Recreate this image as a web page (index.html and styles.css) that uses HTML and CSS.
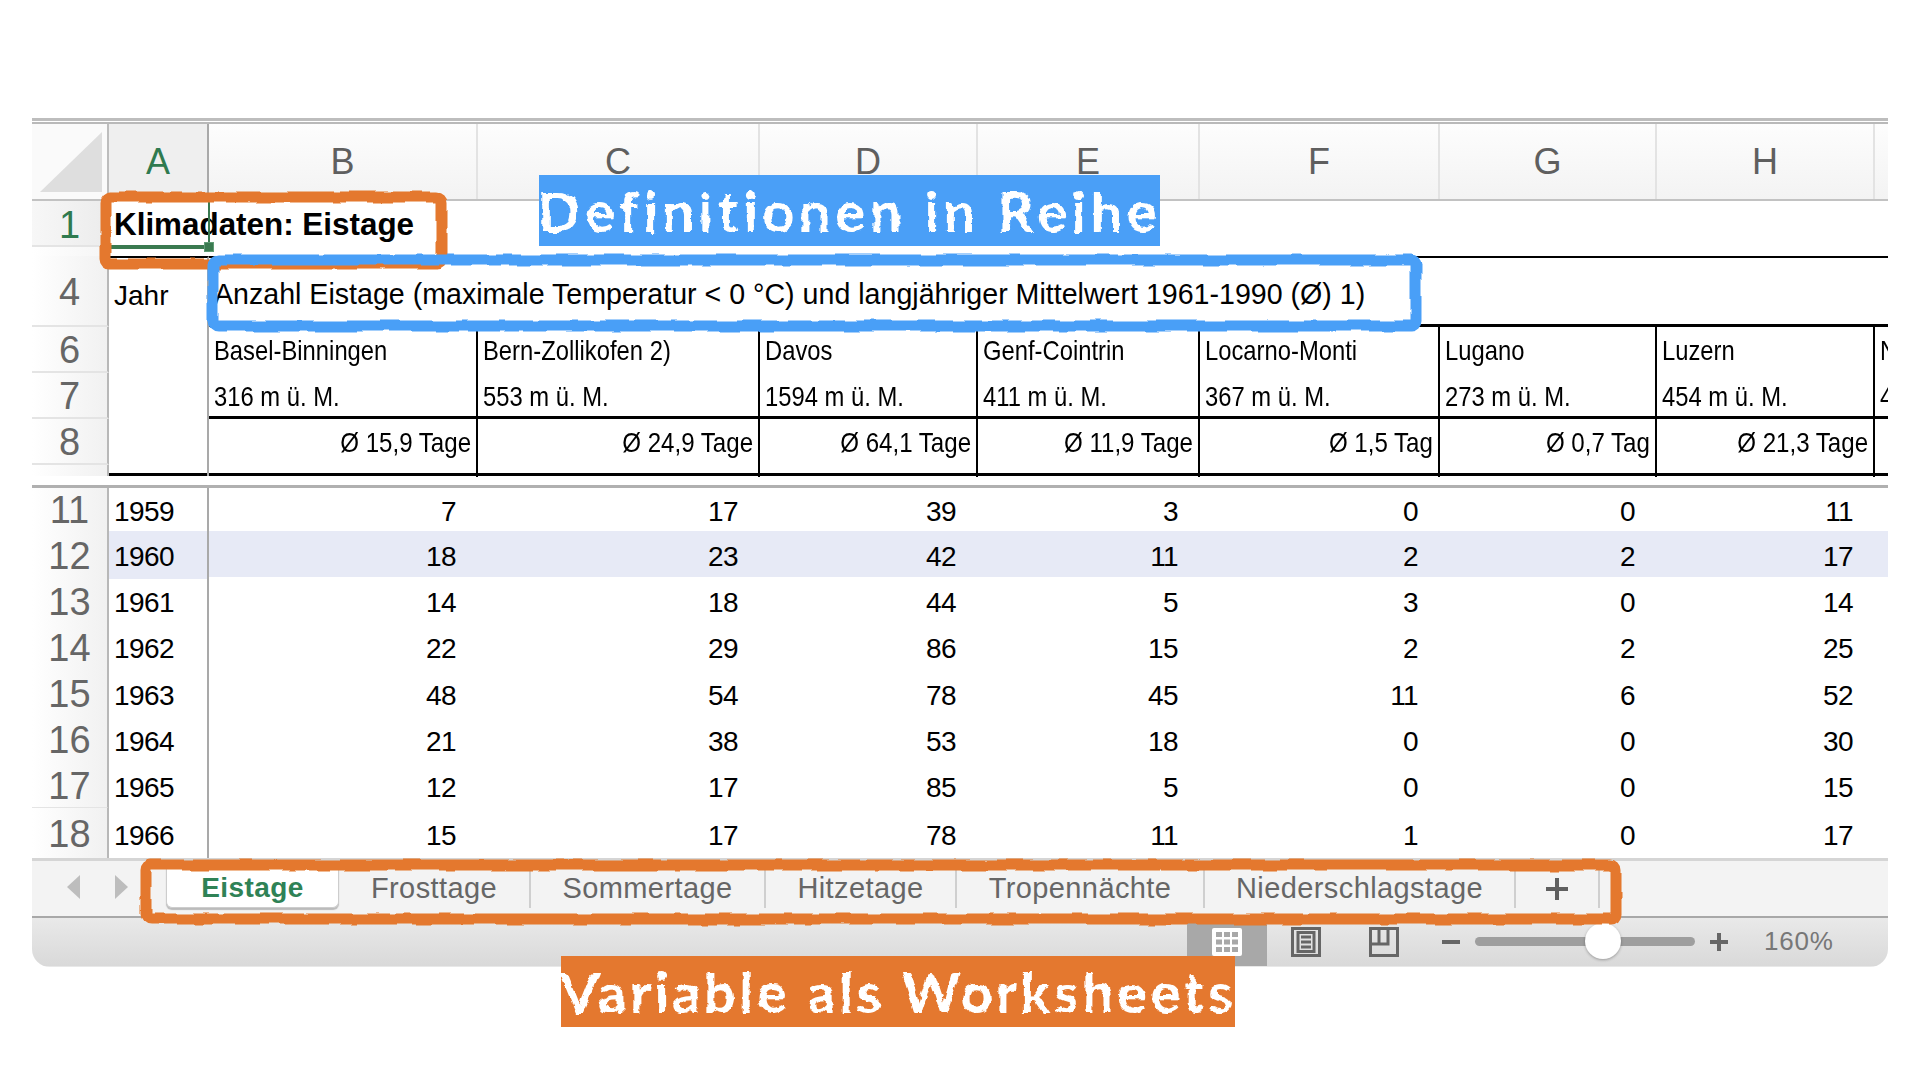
FILE: index.html
```html
<!DOCTYPE html>
<html lang="de">
<head>
<meta charset="utf-8">
<title>Klimadaten: Eistage</title>
<link rel="stylesheet" href="styles.css">
</head>
<body>
<svg class="defs" width="0" height="0" aria-hidden="true">
  <filter id="rough" x="-5%" y="-20%" width="110%" height="140%">
    <feTurbulence type="fractalNoise" baseFrequency="0.035" numOctaves="2" seed="4"/>
    <feDisplacementMap in="SourceGraphic" scale="5" xChannelSelector="R" yChannelSelector="G"/>
  </filter>
  <filter id="roughtext" x="-2%" y="-10%" width="104%" height="120%">
    <feTurbulence type="fractalNoise" baseFrequency="0.09" numOctaves="3" seed="9"/>
    <feDisplacementMap in="SourceGraphic" scale="6" xChannelSelector="R" yChannelSelector="G"/>
  </filter>
</svg>
<main class="sheet">
  <div class="topbar"></div>
  <div class="row colhead">
    <div class="corner"><svg class="corner-tri" width="76" height="74" viewBox="0 0 76 74"><path d="M8 68H70V8Z"/></svg></div>
    <div class="ch sel">A</div><div class="ch">B</div><div class="ch">C</div><div class="ch">D</div><div class="ch">E</div><div class="ch">F</div><div class="ch">G</div><div class="ch">H</div><div class="ch end"></div>
  </div>

  <div class="row r1">
    <div class="rh sel"><span>1</span></div>
    <div class="title">Klimadaten: Eistage</div>
    <div class="selfill"></div>
  </div>

  <div class="row r4">
    <div class="rh"><span>4</span></div>
    <div class="c a jahr">Jahr</div>
    <div class="c long">Anzahl Eistage (maximale Temperatur &lt; 0 °C) und langjähriger Mittelwert 1961-1990 (Ø) 1)</div>
  </div>

  <div class="row r6">
    <div class="rh"><span>6</span></div>
    <div class="c a"></div>
    <div class="c st"><span>Basel-Binningen</span></div><div class="c st"><span>Bern-Zollikofen 2)</span></div><div class="c st"><span>Davos</span></div><div class="c st"><span>Genf-Cointrin</span></div><div class="c st"><span>Locarno-Monti</span></div><div class="c st"><span>Lugano</span></div><div class="c st"><span>Luzern</span></div><div class="c st"><span>N</span></div>
  </div>
  <div class="row r7">
    <div class="rh"><span>7</span></div>
    <div class="c a"></div>
    <div class="c st"><span>316 m ü. M.</span></div><div class="c st"><span>553 m ü. M.</span></div><div class="c st"><span>1594 m ü. M.</span></div><div class="c st"><span>411 m ü. M.</span></div><div class="c st"><span>367 m ü. M.</span></div><div class="c st"><span>273 m ü. M.</span></div><div class="c st"><span>454 m ü. M.</span></div><div class="c st"><span>4</span></div>
  </div>
  <div class="row r8">
    <div class="rh"><span>8</span></div>
    <div class="c a"></div>
    <div class="c av"><span>Ø 15,9 Tage</span></div><div class="c av"><span>Ø 24,9 Tage</span></div><div class="c av"><span>Ø 64,1 Tage</span></div><div class="c av"><span>Ø 11,9 Tage</span></div><div class="c av"><span>Ø 1,5 Tag</span></div><div class="c av"><span>Ø 0,7 Tag</span></div><div class="c av"><span>Ø 21,3 Tage</span></div><div class="c av"></div>
  </div>
  <div class="row gap">
    <div class="rh"></div><div class="c a"></div>
  </div>

  <div class="row data first"><div class="rh"><span>11</span></div><div class="c a y">1959</div><div class="c n">7</div><div class="c n">17</div><div class="c n">39</div><div class="c n">3</div><div class="c n">0</div><div class="c n">0</div><div class="c n">11</div></div>
  <div class="row data hl"><div class="rh"><span>12</span></div><div class="c a y">1960</div><div class="c n">18</div><div class="c n">23</div><div class="c n">42</div><div class="c n">11</div><div class="c n">2</div><div class="c n">2</div><div class="c n">17</div></div>
  <div class="row data"><div class="rh"><span>13</span></div><div class="c a y">1961</div><div class="c n">14</div><div class="c n">18</div><div class="c n">44</div><div class="c n">5</div><div class="c n">3</div><div class="c n">0</div><div class="c n">14</div></div>
  <div class="row data"><div class="rh"><span>14</span></div><div class="c a y">1962</div><div class="c n">22</div><div class="c n">29</div><div class="c n">86</div><div class="c n">15</div><div class="c n">2</div><div class="c n">2</div><div class="c n">25</div></div>
  <div class="row data"><div class="rh"><span>15</span></div><div class="c a y">1963</div><div class="c n">48</div><div class="c n">54</div><div class="c n">78</div><div class="c n">45</div><div class="c n">11</div><div class="c n">6</div><div class="c n">52</div></div>
  <div class="row data"><div class="rh"><span>16</span></div><div class="c a y">1964</div><div class="c n">21</div><div class="c n">38</div><div class="c n">53</div><div class="c n">18</div><div class="c n">0</div><div class="c n">0</div><div class="c n">30</div></div>
  <div class="row data"><div class="rh"><span>17</span></div><div class="c a y">1965</div><div class="c n">12</div><div class="c n">17</div><div class="c n">85</div><div class="c n">5</div><div class="c n">0</div><div class="c n">0</div><div class="c n">15</div></div>
  <div class="row data last"><div class="rh"><span>18</span></div><div class="c a y">1966</div><div class="c n">15</div><div class="c n">17</div><div class="c n">78</div><div class="c n">11</div><div class="c n">1</div><div class="c n">0</div><div class="c n">17</div></div>

  <div class="tabbar">
    <div class="nav">
      <svg width="14" height="26" viewBox="0 0 14 26"><path d="M14 1V25L1 13Z"/></svg>
      <svg width="14" height="26" viewBox="0 0 14 26"><path d="M0 1V25L13 13Z"/></svg>
    </div>
    <div class="tabs">
      <div class="tab active">Eistage</div>
      <div class="tab">Frosttage</div>
      <div class="tab">Sommertage</div>
      <div class="tab">Hitzetage</div>
      <div class="tab">Tropennächte</div>
      <div class="tab">Niederschlagstage</div>
      <div class="tab add"><svg width="22" height="22" viewBox="0 0 22 22"><path d="M11 0V22M0 11H22"/></svg></div>
    </div>
  </div>

  <div class="status">
    <div class="view on">
      <svg width="30" height="28" viewBox="0 0 30 28"><rect class="gridbg" x="1" y="1" width="28" height="26" rx="1"/><path class="gridcells" d="M4 4H10V9H4ZM12 4H18V9H12ZM20 4H26V9H20ZM4 11.5H10V16.5H4ZM12 11.5H18V16.5H12ZM20 11.5H26V16.5H20ZM4 19H10V24H4ZM12 19H18V24H12ZM20 19H26V24H20Z"/></svg>
    </div>
    <div class="view">
      <svg width="30" height="30" viewBox="0 0 30 30"><rect x="1.5" y="1.5" width="27" height="27"/><rect x="7" y="5.5" width="16" height="19"/><path d="M10 10H20M10 15H20M10 20H20"/></svg>
    </div>
    <div class="view">
      <svg width="30" height="30" viewBox="0 0 30 30"><path d="M1.5 1.5H28.5V28.5H1.5ZM1.5 17H19V1.5M10 1.5V17"/></svg>
    </div>
    <div class="zoomctl">
      <span class="zbtn minus"></span>
      <div class="track"><span class="knob"></span></div>
      <span class="zbtn plus"></span>
      <span class="pct">160%</span>
    </div>
  </div>
</main>

<div class="sel-bottom"></div>
<div class="sel-side"></div>
<div class="sel-handle"></div>

<svg class="marks" width="1920" height="1080" viewBox="0 0 1920 1080" aria-hidden="true">
  <rect class="mk orange" x="105" y="197" width="337" height="67" rx="5"/>
  <rect class="mk blue" x="213" y="260" width="1203" height="66" rx="5"/>
  <rect class="mk orange" x="146" y="865" width="1470" height="54" rx="5"/>
</svg>
<div class="label lblue"><span>Definitionen in Reihe</span></div>
<div class="label lorange"><span>Variable als Worksheets</span></div>
</body>
</html>
```

FILE: styles.css
```css
html, body { margin: 0; padding: 0; background: #fff; }
body { width: 1920px; height: 1080px; overflow: hidden; position: relative; font-family: "Liberation Sans", Arial, sans-serif; color: #000; }
.defs { position: absolute; }

.sheet { margin: 118px 0 0 32px; width: 1856px; overflow: hidden; border-radius: 0 0 18px 18px; }
.topbar { height: 6px; box-sizing: border-box; border-top: 3px solid #bdbdbd; border-bottom: 2px solid #b9b9b9; }

.row { display: grid; grid-template-columns: 77px 100px 269px 282px 218px 222px 240px 217px 218px 13px; align-items: stretch; }

/* column headings */
.colhead { height: 77px; border-bottom: 2px solid #c2c2c2; background: linear-gradient(#fdfdfd, #f3f3f3); box-sizing: border-box; }
.corner { background: #fafafa; border-right: 2px solid #bdbdbd; box-sizing: border-box; }
.corner-tri { display: block; }
.corner-tri path { fill: #dedede; }
.ch { display: flex; justify-content: center; align-items: center; font-size: 36px; color: #5f5f5f; border-right: 2px solid #e3e3e3; box-sizing: border-box; }
.ch.sel { color: #2f7a4f; background: #efefef; border-right: 2px solid #a9a9a9; }
.ch.end { border-right: 0; }

/* row headings */
.rh { display: flex; justify-content: center; align-items: center; font-size: 38px; color: #666; background: linear-gradient(90deg, #fff, #f1f1f1); border-right: 2px solid #b8b8b8; border-bottom: 2px solid #e4e4e4; box-sizing: border-box; }
.rh span { position: relative; top: 1px; }
.rh.sel { color: #2f7a4f; background: linear-gradient(90deg, #f7f7f7, #ececec); padding-top: 3px; }

/* cells */
.c { box-sizing: border-box; font-size: 28px; white-space: nowrap; overflow: hidden; display: flex; align-items: center; padding: 5px 6px 0 5px; }
.a { border-right: 2px solid #a9a9a9; }

.r1 { height: 55px; position: relative; grid-template-rows: 46px 9px; }
.r1 .rh { grid-row: 1; }
.title { grid-column: 2 / 6; grid-row: 1; font-size: 31.4px; font-weight: 700; padding: 2px 0 0 5px; display: flex; align-items: center; }
.selfill { grid-column: 1; grid-row: 2; background: linear-gradient(90deg, #fff, #f5f5f5); border-right: 2px solid #b8b8b8; }

.r4 { height: 71px; box-sizing: border-box; }
.r4 .rh { padding-top: 2px; }
.r4 .a { border-top: 2px solid #000; padding-top: 6px; }
.r4 .long { grid-column: 3 / 11; font-size: 28.6px; padding: 6px 0 0 5px; overflow: visible; border-top: 2px solid #000; border-bottom: 3px solid #000; }
.jahr { letter-spacing: 0; }

.r6, .r7 { height: 46px; }
.st { border-right: 2px solid #000; padding: 2px 0 0 5px; }
.r7 .st { padding-top: 5px; }
.st span { display: inline-block; transform: scaleX(.85); transform-origin: 0 50%; }
.r7 .st { border-bottom: 3px solid #000; }
.r8 { height: 46px; }
.av { border-right: 2px solid #000; justify-content: flex-end; padding: 0 5px 0 0; height: 58px; margin-bottom: -12px; padding-bottom: 10px; position: relative; z-index: 1; }
.av span { display: inline-block; transform: scaleX(.86); transform-origin: 100% 50%; }
.st:last-child, .av:last-child { border-right: 0; }
.gap { height: 11px; grid-template-columns: 77px 100px 1fr; border-bottom: 3px solid #000; box-sizing: border-box; position: relative; }
.gap .c { padding: 0; margin-bottom: -3px; }
.gap .rh { border-bottom: 0; margin-bottom: -3px; }

/* frozen panes divider */
.data { height: 46.2px; }
.data.first { height: 45.5px; margin-top: 9px; border-top: 3px solid #b0b0b0; box-sizing: border-box; }
.data .c { align-items: flex-end; padding-bottom: 5.5px; letter-spacing: -0.6px; }
.data.first .c { padding-bottom: 5px; }
.data .rh { padding-top: 3px; }
.data.first .rh { padding-top: 0; }
.data.last { height: 50px; }
.data.last .rh { padding-bottom: 0; padding-top: 2px; border-bottom: 0; }
.data.last .c { padding-bottom: 6px; }
.n { justify-content: flex-end; padding-right: 22px; }
.hl { background: #e7eaf6; }
.hl .a { background: #e7eaf6; }

/* sheet tabs */
.tabbar { height: 60px; box-sizing: border-box; background: #f3f3f3; border-top: 3px solid #d5d5d5; border-bottom: 2px solid #a8a8a8; display: flex; }
.nav { width: 134px; display: flex; gap: 35px; padding: 13px 0 0 34px; box-sizing: border-box; }
.nav path { fill: #bdbdbd; }
.tabs { display: grid; grid-template-columns: 173px 192px 235px 191px 248px 311px 84px; align-items: start; }
.tab { height: 41px; box-sizing: border-box; margin-top: 6px; padding-top: 3px; border-right: 2px solid #cfcfcf; display: flex; align-items: center; justify-content: center; font-size: 29px; letter-spacing: 0.4px; color: #666; }
.tab.active { background: #fff; color: #2f8256; font-weight: 700; border: 1px solid #cdcdcd; border-top: 0; border-radius: 0 0 6px 6px; box-shadow: 0 2px 1px #bbb; font-size: 28px; }
.tab.add svg { fill: none; stroke: #5f5f5f; stroke-width: 4; }

/* status bar */
.status { height: 49px; background: linear-gradient(#e9e9e9, #d9d9d9); display: flex; padding-left: 1155px; box-sizing: border-box; border-bottom: 1px solid #e8e8e8; }
.view { width: 80px; display: flex; align-items: center; justify-content: center; }
.view.on { background: #a8a8a8; width: 80px; }
.view svg { fill: none; stroke: #666; stroke-width: 3; }
.view.on .gridbg { fill: #fff; stroke: #fff; stroke-width: 2; }
.view.on .gridcells { fill: #a8a8a8; stroke: none; }
.view.on + .view { width: 78px; }
.view + .view + .view { width: 77px; }
.zoomctl { display: flex; align-items: center; padding-left: 20px; }
.zbtn { width: 18px; height: 18px; position: relative; display: block; }
.zbtn::before { content: ""; position: absolute; left: 0; right: 0; top: 7px; height: 4px; background: #666; }
.plus::after { content: ""; position: absolute; top: 0; bottom: 0; left: 7px; width: 4px; background: #666; }
.track { width: 220px; height: 9px; border-radius: 5px; background: #9e9e9e; margin: 0 15px 0 15px; position: relative; }
.knob { position: absolute; left: 110px; top: -14px; width: 36px; height: 36px; border-radius: 50%; background: #fff; box-shadow: 0 1px 3px rgba(0,0,0,.3); }
.pct { font-size: 26px; letter-spacing: 0.8px; color: #777; margin-left: 36px; }

/* overlays */
.sel-bottom { position: absolute; left: 109px; top: 245px; width: 95px; height: 4px; background: #3a7a50; }
.sel-side { position: absolute; left: 208px; top: 200px; width: 2px; height: 44px; background: #3a7a50; }
.sel-handle { position: absolute; left: 204px; top: 242px; width: 10px; height: 10px; background: #3a7a50; box-shadow: inset 0 0 0 1px #5f9c75; }
.marks { position: absolute; left: 0; top: 0; filter: url(#rough); }
.mk { fill: none; stroke-width: 11; stroke-linejoin: round; }
.orange { stroke: #e4782f; }
.blue { stroke: #4a9ff7; }
.label { position: absolute; box-sizing: border-box; display: flex; align-items: center; justify-content: center; color: #fff; font-family: "Lato", sans-serif; font-weight: 700; white-space: nowrap; }
.label span { filter: url(#roughtext); }
.lblue { left: 539px; top: 175px; width: 621px; height: 71px; background: #4a9ff7; font-size: 56px; letter-spacing: 4.7px; }
.lorange { left: 561px; top: 956px; width: 674px; height: 71px; background: #e4782f; font-size: 56px; letter-spacing: 3.5px; }
```
